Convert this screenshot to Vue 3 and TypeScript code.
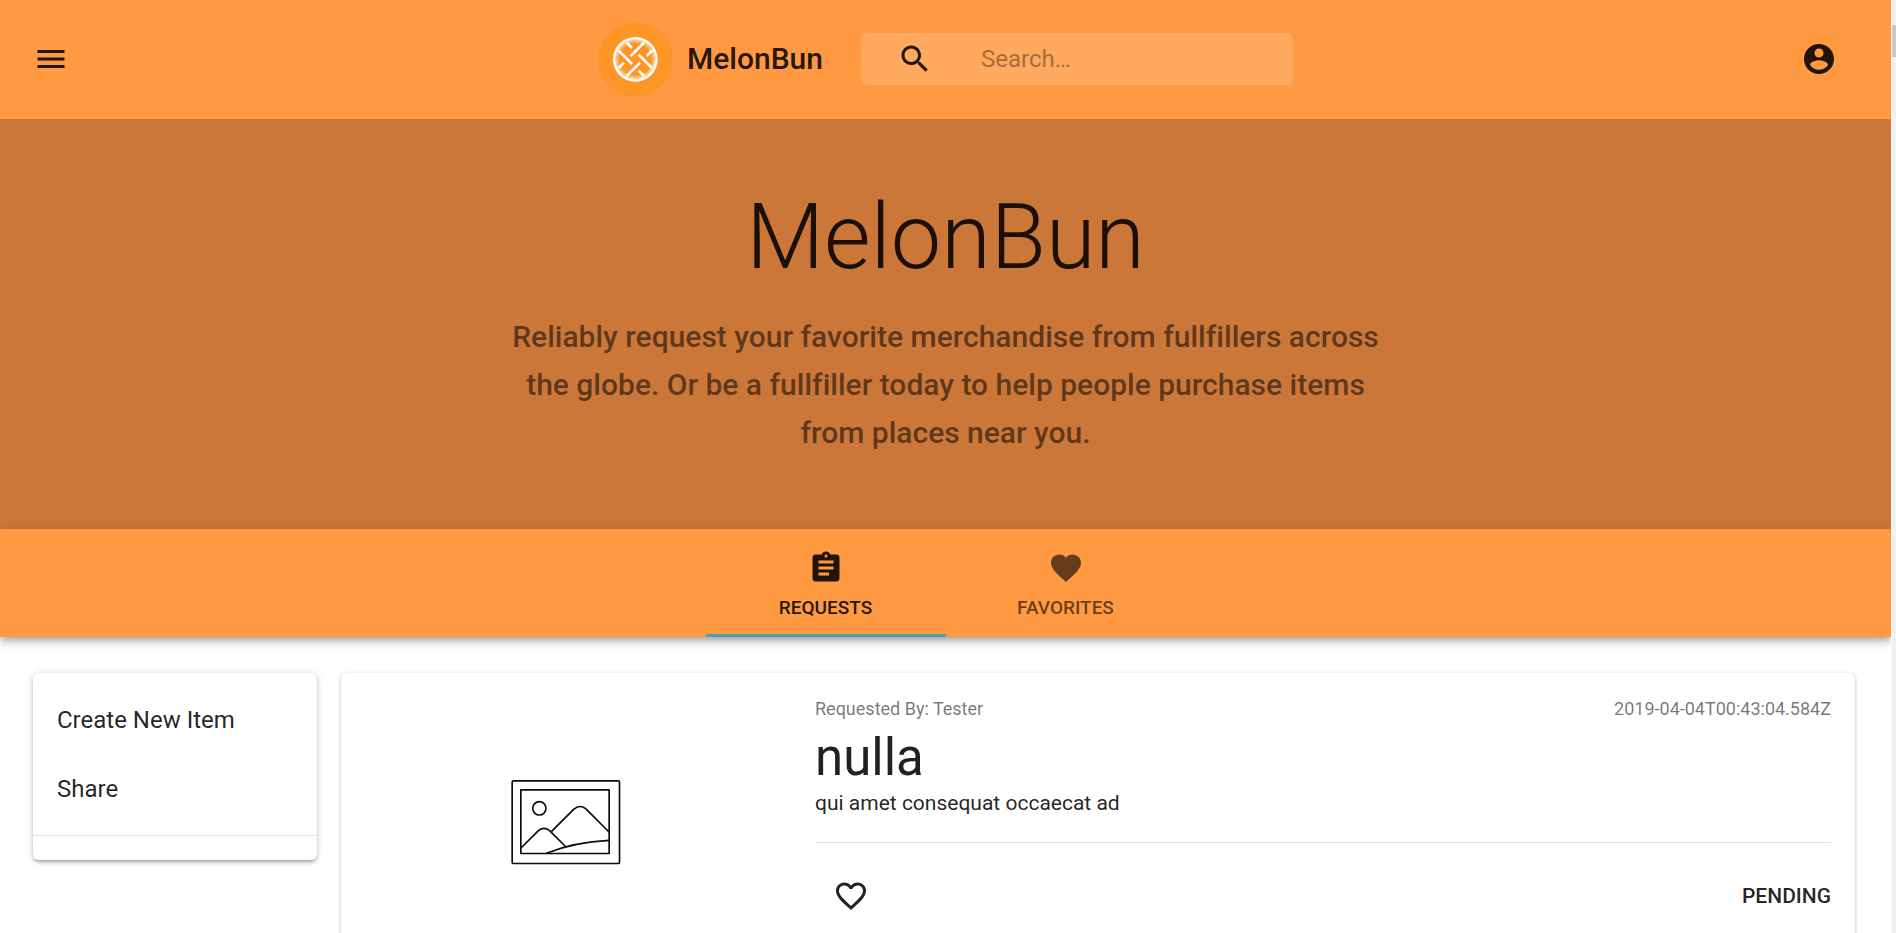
<script setup lang="ts">
import { ref } from 'vue'

interface Tab {
  id: string
  label: string
  icon: string
}

interface RequestItem {
  id: number
  requester: string
  createdAt: string
  name: string
  description: string
  status: string
}

const tabs: Tab[] = [
  {
    id: 'requests',
    label: 'REQUESTS',
    icon: 'M19 3h-4.18C14.4 1.84 13.3 1 12 1c-1.3 0-2.4.84-2.82 2H5c-1.1 0-2 .9-2 2v14c0 1.1.9 2 2 2h14c1.1 0 2-.9 2-2V5c0-1.1-.9-2-2-2zm-7 0c.55 0 1 .45 1 1s-.45 1-1 1-1-.45-1-1 .45-1 1-1zm2 14H7v-2h7v2zm3-4H7v-2h10v2zm0-4H7V7h10v2z',
  },
  {
    id: 'favorites',
    label: 'FAVORITES',
    icon: 'M12 21.35l-1.45-1.32C5.4 15.36 2 12.28 2 8.5 2 5.42 4.42 3 7.5 3c1.74 0 3.41.81 4.5 2.09C13.09 3.81 14.76 3 16.5 3 19.58 3 22 5.42 22 8.5c0 3.78-3.4 6.86-8.55 11.54L12 21.35z',
  },
]

const requests: RequestItem[] = [
  {
    id: 1,
    requester: 'Tester',
    createdAt: '2019-04-04T00:43:04.584Z',
    name: 'nulla',
    description: 'qui amet consequat occaecat ad',
    status: 'PENDING',
  },
]

const actions: string[] = ['Create New Item', 'Share']
const activeTab = ref<string>('requests')
const query = ref<string>('')
</script>

<template>
  <div class="window">
    <div class="page">
      <header class="app-bar">
        <button class="icon-button" type="button" aria-label="Open menu">
          <svg class="icon" viewBox="0 0 24 24"><path d="M3 18h18v-2H3v2zm0-5h18v-2H3v2zm0-7v2h18V6H3z" /></svg>
        </button>
        <div class="brand-group">
          <a class="brand" href="#">
            <svg class="logo" viewBox="0 0 225 225" aria-hidden="true">
              <defs>
                <radialGradient id="crust">
                  <stop offset="0.7" stop-color="#fff" stop-opacity="0" />
                  <stop offset="0.87" stop-color="#fff" stop-opacity="0.55" />
                  <stop offset="0.92" stop-color="#fff" />
                  <stop offset="1" stop-color="#fff" />
                </radialGradient>
              </defs>
              <circle cx="112" cy="112" r="112" fill="#ff9427" />
              <g stroke="#fff" stroke-width="8" fill="none">
                <path d="M86 62L102 78M122 98L162 138" />
                <path d="M138 62L98 102M78 122L62 138" />
                <path d="M62 86L102 126M122 146L138 162" />
                <path d="M162 86L146 102M126 122L86 162" />
              </g>
              <circle cx="112" cy="112" r="67" fill="url(#crust)" />
            </svg>
            <span class="brand-name">MelonBun</span>
          </a>
          <label class="search">
            <svg class="icon" viewBox="0 0 24 24" aria-hidden="true"><path d="M15.5 14h-.79l-.28-.27C15.41 12.59 16 11.11 16 9.5 16 5.91 13.09 3 9.5 3S3 5.91 3 9.5 5.91 16 9.5 16c1.61 0 3.09-.59 4.23-1.57l.27.28v.79l5 4.99L20.49 19l-4.99-5zm-6 0C7.01 14 5 11.99 5 9.5S7.01 5 9.5 5 14 7.01 14 9.5 11.99 14 9.5 14z" /></svg>
            <input v-model="query" class="search-input" type="text" placeholder="Search…" aria-label="Search" />
          </label>
        </div>
        <button class="icon-button account" type="button" aria-label="Account">
          <svg class="icon" viewBox="0 0 24 24"><path d="M12 2C6.48 2 2 6.48 2 12s4.48 10 10 10 10-4.48 10-10S17.52 2 12 2zm0 3c1.66 0 3 1.34 3 3s-1.34 3-3 3-3-1.34-3-3 1.34-3 3-3zm0 14.2c-2.5 0-4.71-1.28-6-3.22.03-1.99 4-3.08 6-3.08 1.99 0 5.97 1.09 6 3.08-1.29 1.94-3.5 3.22-6 3.22z" /></svg>
        </button>
      </header>

      <section class="hero">
        <h1 class="hero-title">MelonBun</h1>
        <p class="hero-text">
          Reliably request your favorite merchandise from fullfillers across the globe. Or be a
          fullfiller today to help people purchase items from places near you.
        </p>
      </section>

      <nav class="tabs" role="tablist">
        <button
          v-for="tab in tabs"
          :key="tab.id"
          class="tab"
          :class="{ active: activeTab === tab.id }"
          type="button"
          role="tab"
          :aria-selected="activeTab === tab.id"
          @click="activeTab = tab.id"
        >
          <svg class="icon" viewBox="0 0 24 24" aria-hidden="true"><path :d="tab.icon" /></svg>
          <span>{{ tab.label }}</span>
        </button>
      </nav>

      <main class="content">
        <aside class="side-card">
          <ul class="actions">
            <li v-for="action in actions" :key="action">
              <button class="action" type="button">{{ action }}</button>
            </li>
          </ul>
        </aside>

        <div class="requests">
          <article v-for="item in requests" :key="item.id" class="request">
            <div class="media">
              <svg class="placeholder" viewBox="60 54 342 264" aria-hidden="true">
                <g fill="none" stroke="#0c0c0c" stroke-width="5" stroke-linejoin="round">
                  <rect x="69.5" y="62.5" width="322" height="248" rx="4" />
                  <rect x="95.5" y="89.5" width="265" height="191" />
                  <circle cx="151" cy="145" r="20" />
                  <path d="M96 264L149 211Q165 199 181 211L231 261" />
                  <path d="M187 215L254 148Q272 132 290 146L360 216" />
                  <path d="M172 280Q255 246 360 241" />
                </g>
              </svg>
            </div>
            <div class="details">
              <div class="meta">
                <span>Requested By: {{ item.requester }}</span>
                <time :datetime="item.createdAt">{{ item.createdAt }}</time>
              </div>
              <h2 class="name">{{ item.name }}</h2>
              <p class="description">{{ item.description }}</p>
              <div class="footer">
                <button class="favorite" type="button" aria-label="Add to favorites">
                  <svg class="icon" viewBox="0 0 24 24"><path d="M16.5 3c-1.74 0-3.41.81-4.5 2.09C10.91 3.81 9.24 3 7.5 3 4.42 3 2 5.42 2 8.5c0 3.78 3.4 6.86 8.55 11.54L12 21.35l1.45-1.32C18.6 15.36 22 12.28 22 8.5 22 5.42 19.58 3 16.5 3zm-4.4 15.55l-.1.1-.1-.1C7.14 14.24 4 11.39 4 8.5 4 6.5 5.5 5 7.5 5c1.54 0 3.04.99 3.57 2.36h1.87C13.46 5.99 14.96 5 16.5 5c2 0 3.5 1.5 3.5 3.5 0 2.89-3.14 5.74-7.9 10.05z" /></svg>
                </button>
                <span class="status">{{ item.status }}</span>
              </div>
            </div>
          </article>
        </div>
      </main>
    </div>
    <div class="scroll-track"><div class="scroll-thumb"></div></div>
  </div>
</template>

<style>
body {
  margin: 0;
  background: #fff;
}
</style>

<style scoped>
.window {
  display: flex;
  height: 100vh;
  overflow: hidden;
  font-family: Roboto, 'Noto Sans', sans-serif;
  font-variant-ligatures: none;
  color: rgba(0, 0, 0, 0.87);
}

.window *,
.window {
  box-sizing: border-box;
}

.page {
  flex: 1;
  min-width: 0;
  overflow: hidden;
}

.scroll-track {
  flex: none;
  width: 5px;
  padding-top: 25px;
  border-left: 1px solid #f8f8f8;
  background: #f1f1f1;
}

.scroll-thumb {
  height: 32px;
  background: #c8c8c8;
}

button {
  border: 0;
  padding: 0;
  background: none;
  color: inherit;
  font: inherit;
  cursor: pointer;
}

.icon {
  display: block;
  flex: none;
  width: 36px;
  height: 36px;
  fill: currentColor;
}

.app-bar {
  display: grid;
  grid-template-columns: 1fr auto 1fr;
  align-items: center;
  height: 119px;
  padding-bottom: 1px;
  background: #ff9a42;
}

.icon-button {
  justify-self: start;
  margin-left: 33px;
}

.icon-button.account {
  justify-self: end;
  margin: 0 54px 0 0;
}

.brand-group {
  display: flex;
  align-items: center;
  gap: 38px;
}

.brand {
  display: flex;
  align-items: center;
  gap: 14px;
  color: inherit;
  text-decoration: none;
}

.logo {
  display: block;
  width: 75px;
  height: 75px;
}

.brand-name {
  font-size: 30px;
  font-weight: 500;
  line-height: 48px;
}

.search {
  display: flex;
  align-items: center;
  gap: 48px;
  width: 432px;
  height: 52px;
  padding-left: 36px;
  border-radius: 6px;
  background: rgba(255, 255, 255, 0.15);
}

.search-input {
  flex: 1;
  min-width: 0;
  height: 100%;
  padding: 0;
  border: 0;
  outline: 0;
  background: none;
  color: inherit;
  font: inherit;
  font-size: 24px;
}

.search-input::placeholder {
  color: rgba(0, 0, 0, 0.87);
  opacity: 0.42;
}

.hero {
  padding: 74px 24px 72px;
  background: #cc773a;
  text-align: center;
}

.hero-title {
  margin: 0 0 30px;
  font-size: 90px;
  font-weight: 300;
  line-height: 90px;
}

.hero-text {
  max-width: 900px;
  margin: 0 auto;
  color: rgba(0, 0, 0, 0.54);
  font-size: 30px;
  font-weight: 500;
  line-height: 48px;
}

.tabs {
  position: relative;
  display: flex;
  justify-content: center;
  background: #ff9a42;
  box-shadow: 0 3px 6px -1px rgba(0, 0, 0, 0.2), 0 6px 8px 0 rgba(0, 0, 0, 0.14),
    0 1px 15px 0 rgba(0, 0, 0, 0.12);
}

.tab {
  display: flex;
  flex-direction: column;
  align-items: center;
  gap: 10px;
  width: 240px;
  height: 108px;
  padding-top: 21px;
  border-bottom: 3px solid transparent;
  color: rgba(0, 0, 0, 0.6);
  font-size: 19px;
  font-weight: 500;
  line-height: 24px;
}

.tab.active {
  border-bottom-color: #4b9fa8;
  color: rgba(0, 0, 0, 0.87);
}

.content {
  display: flex;
  align-items: flex-start;
  gap: 24px;
  padding: 36px 36px 36px 33px;
}

.side-card {
  flex: none;
  width: 284px;
  padding-bottom: 24px;
  border-radius: 6px;
  background: #fff;
  box-shadow: 0 1px 7px rgba(0, 0, 0, 0.2), 0 3px 3px rgba(0, 0, 0, 0.14),
    0 4px 2px -3px rgba(0, 0, 0, 0.12);
}

.actions {
  margin: 0;
  padding: 13px 0 11px;
  border-bottom: 1px solid #e0e0e0;
  list-style: none;
}

.action {
  display: block;
  width: 100%;
  padding: 16px 24px;
  font-size: 24px;
  line-height: 37px;
  text-align: left;
}

.requests {
  flex: 1;
  min-width: 0;
}

.request {
  display: flex;
  border-radius: 6px;
  background: #fff;
  box-shadow: 0 1px 4px rgba(0, 0, 0, 0.2), 0 1px 2px rgba(0, 0, 0, 0.14),
    0 3px 1px -1px rgba(0, 0, 0, 0.12);
}

.media {
  display: flex;
  flex: none;
  align-items: center;
  justify-content: center;
  width: 450px;
  height: 298px;
}

.placeholder {
  width: 114px;
  height: 88px;
}

.details {
  flex: 1;
  min-width: 0;
  padding: 24px;
}

.meta {
  display: flex;
  justify-content: space-between;
  color: rgba(0, 0, 0, 0.54);
  font-size: 18px;
  line-height: 23px;
}

.name {
  margin: 8px 0 0;
  font-size: 51px;
  font-weight: 400;
  line-height: 60px;
}

.description {
  margin: 0;
  padding-bottom: 24px;
  border-bottom: 1px solid #e0e0e0;
  font-size: 21px;
  line-height: 30px;
}

.footer {
  display: flex;
  align-items: center;
  justify-content: space-between;
  padding-top: 17px;
}

.favorite {
  padding: 18px;
}

.status {
  font-size: 21px;
  font-weight: 500;
}
</style>
